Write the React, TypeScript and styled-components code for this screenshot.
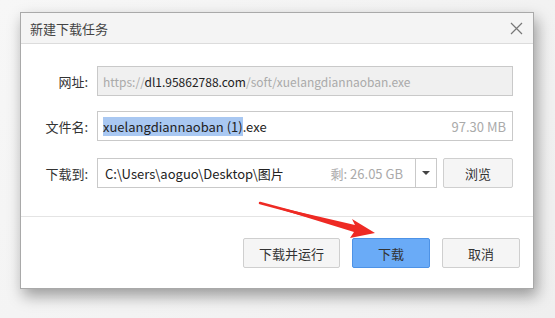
import React from "react";
import styled, { createGlobalStyle } from "styled-components";

const Global = createGlobalStyle`
  html, body { margin: 0; padding: 0; background: #f0f0f0; }
  body { font-family: "Noto Sans CJK SC", "Noto Sans", sans-serif; font-size: 13px; color: #333; }
`;

const Page = styled.div`
  position: relative;
  width: 555px;
  height: 318px;
  padding: 12px 0 0 20px;
  box-sizing: border-box;
  background: linear-gradient(135deg, #f7f7f7 0%, #efefef 100%);
  overflow: hidden;
`;

const Dialog = styled.div`
  width: 514px;
  height: 277px;
  box-sizing: border-box;
  background: #fff;
  border: 1px solid #a9a9a9;
  box-shadow: 3px 7px 14px rgba(0, 0, 0, 0.36);
  display: flex;
  flex-direction: column;
`;

const TitleBar = styled.div`
  height: 31px;
  box-sizing: border-box;
  background: #f4f4f4;
  border-bottom: 1px solid #dcdcdc;
  display: flex;
  align-items: center;
  justify-content: space-between;
  padding: 0 10px 0 9px;
`;

const Title = styled.span`
  font-size: 13px;
  color: #444;
`;

const Body = styled.div`
  padding: 22px 20px 0 0;
  display: flex;
  flex-direction: column;
  height: 173px;
  box-sizing: border-box;
  border-bottom: 1px solid #e4e4e4;
`;

const Row = styled.div<{ $mt?: number }>`
  display: flex;
  align-items: center;
  height: 30px;
  margin-top: ${(p) => p.$mt ?? 0}px;
`;

const Label = styled.div`
  width: 67px;
  text-align: right;
  margin-right: 9px;
  color: #333;
  white-space: nowrap;
`;

const Field = styled.div<{ $disabled?: boolean }>`
  flex: 1;
  height: 30px;
  box-sizing: border-box;
  border: 1px solid #c9c9c9;
  background: ${(p) => (p.$disabled ? "#f0f0f0" : "#fff")};
  font-size: ${(p) => (p.$disabled ? 12 : 13)}px;
  display: flex;
  align-items: center;
  justify-content: space-between;
  padding: 0 6px 0 5px;
  white-space: nowrap;
  overflow: hidden;
`;

const Gray = styled.span`
  color: #aaa;
`;

const Dark = styled.span`
  color: #222;
`;

const Sel = styled.span`
  background: #a9c8f2;
  color: #222;
`;

const PathField = styled.div`
  width: 340px;
  height: 30px;
  box-sizing: border-box;
  border: 1px solid #c9c9c9;
  display: flex;
  align-items: stretch;
`;

const PathText = styled.div`
  flex: 1;
  display: flex;
  align-items: center;
  justify-content: space-between;
  padding: 0 12px 0 7px;
  white-space: nowrap;
`;

const DropBtn = styled.div`
  width: 20px;
  border-left: 1px solid #c9c9c9;
  display: flex;
  align-items: center;
  justify-content: center;
`;

const Tri = styled.span`
  width: 0;
  height: 0;
  border-left: 4px solid transparent;
  border-right: 4px solid transparent;
  border-top: 4px solid #444;
`;

const Button = styled.button<{ $primary?: boolean; $w: number }>`
  width: ${(p) => p.$w}px;
  height: 30px;
  box-sizing: border-box;
  border: 1px solid ${(p) => (p.$primary ? "#4d92e6" : "#cfcfcf")};
  background: ${(p) => (p.$primary ? "#6aabf7" : "#f5f5f5")};
  border-radius: 2px;
  font-family: inherit;
  font-size: 13px;
  color: #333;
  padding: 0;
`;

const Footer = styled.div`
  flex: 1;
  display: flex;
  justify-content: flex-end;
  align-items: flex-start;
  gap: 12px;
  padding: 21px 13px 0 0;
`;

const Arrow = styled.svg`
  position: absolute;
  left: 0;
  top: 0;
  pointer-events: none;
`;

export default function App() {
  return (
    <>
      <Global />
      <Page>
        <Dialog>
          <TitleBar>
            <Title>新建下载任务</Title>
            <svg width="13" height="13" viewBox="0 0 13 13">
              <path d="M1 1 L12 12 M12 1 L1 12" stroke="#777" strokeWidth="1.2" fill="none" />
            </svg>
          </TitleBar>
          <Body>
            <Row>
              <Label>网址:</Label>
              <Field $disabled>
                <span>
                  <Gray>https://</Gray>
                  <Dark>dl1.95862788.com</Dark>
                  <Gray>/soft/xuelangdiannaoban.exe</Gray>
                </span>
              </Field>
            </Row>
            <Row $mt={15}>
              <Label>文件名:</Label>
              <Field>
                <span>
                  <Sel>xuelangdiannaoban (1)</Sel>
                  <Dark>.exe</Dark>
                </span>
                <Gray>97.30 MB</Gray>
              </Field>
            </Row>
            <Row $mt={17}>
              <Label>下载到:</Label>
              <PathField>
                <PathText>
                  <Dark>C:\Users\aoguo\Desktop\图片</Dark>
                  <Gray>剩: 26.05 GB</Gray>
                </PathText>
                <DropBtn>
                  <Tri />
                </DropBtn>
              </PathField>
              <Button $w={70} style={{ marginLeft: 6 }}>浏览</Button>
            </Row>
          </Body>
          <Footer>
            <Button $w={97}>下载并运行</Button>
            <Button $w={78} $primary>下载</Button>
            <Button $w={78}>取消</Button>
          </Footer>
        </Dialog>
        <Arrow width="555" height="318" viewBox="0 0 555 318">
          <path d="M260 203 L355 225 L352 219 L375 233 L350 238 L354 232 Z" fill="#ee2a24" />
          <path d="M260 203 L357 229" stroke="#ee2a24" strokeWidth="2.5" strokeLinecap="round" />
        </Arrow>
      </Page>
    </>
  );
}
